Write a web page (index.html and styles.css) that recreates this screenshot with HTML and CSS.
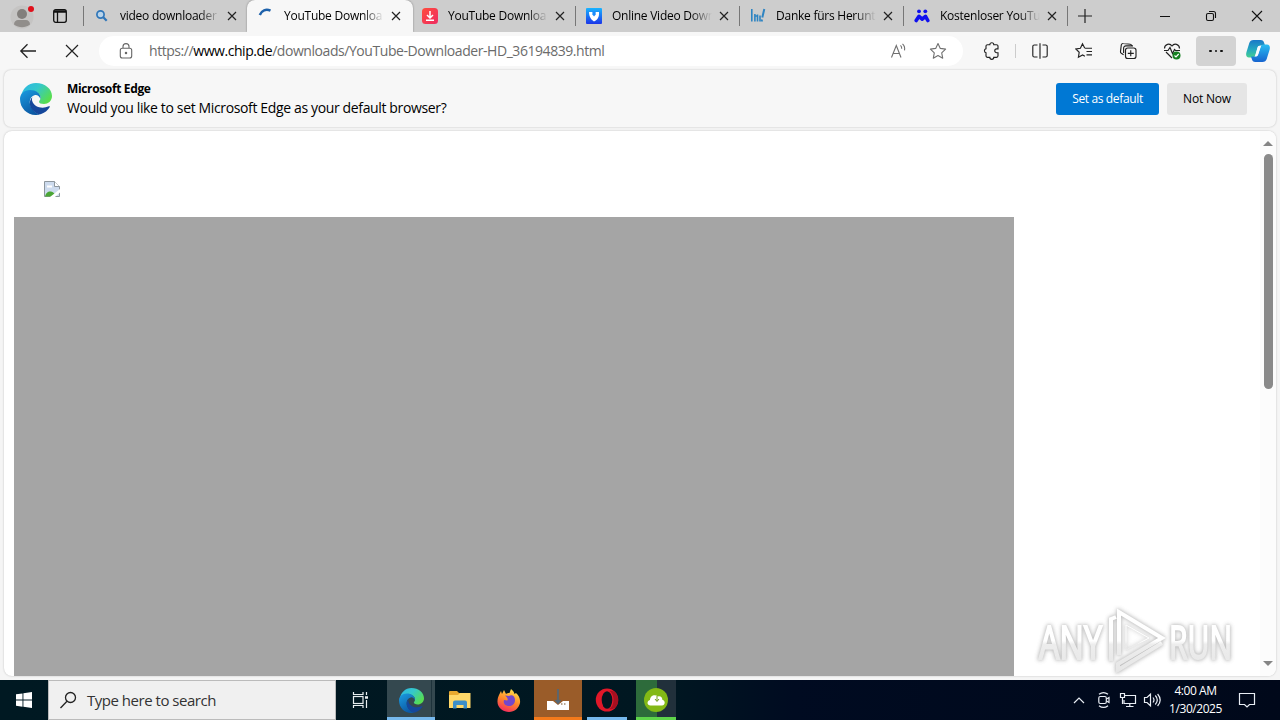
FILE: index.html
```html
<!DOCTYPE html>
<html lang="en">
<head>
<meta charset="utf-8">
<title>YouTube Downloader HD</title>
<link rel="stylesheet" href="styles.css">
</head>
<body>
<svg class="defs" width="0" height="0" aria-hidden="true">
  <defs>
    <linearGradient id="eg1" x1="0" y1="0" x2="1" y2="0.6"><stop offset="0" stop-color="#2bb5e8"/><stop offset=".5" stop-color="#35c8ca"/><stop offset="1" stop-color="#57dd50"/></linearGradient>
    <linearGradient id="eg2" x1="0" y1="0" x2="0.5" y2="1"><stop offset="0" stop-color="#1b9de2"/><stop offset="1" stop-color="#0c59a4"/></linearGradient>
    <linearGradient id="ff" x1=".7" y1="0" x2=".3" y2="1"><stop offset="0" stop-color="#ffe34a"/><stop offset=".5" stop-color="#ff8a2b"/><stop offset="1" stop-color="#f5285f"/></linearGradient>
    <linearGradient id="vd" x1="0" y1="0" x2="0" y2="1"><stop offset="0" stop-color="#19b4ff"/><stop offset="1" stop-color="#1b35e8"/></linearGradient>
    <linearGradient id="dl" x1="0" y1="0" x2="1" y2="1"><stop offset="0" stop-color="#ff4d3d"/><stop offset="1" stop-color="#ee2b62"/></linearGradient>
    <linearGradient id="cp1" x1="0" y1="0" x2="0" y2="1"><stop offset="0" stop-color="#1a78c8"/><stop offset=".55" stop-color="#25a9c0"/><stop offset="1" stop-color="#45cf90"/></linearGradient>
    <linearGradient id="cp2" x1="0" y1="0" x2="0" y2="1"><stop offset="0" stop-color="#27bdf2"/><stop offset="1" stop-color="#1764cf"/></linearGradient>
    <linearGradient id="wm" gradientUnits="userSpaceOnUse" x1="0" y1="8" x2="0" y2="68"><stop offset="0" stop-color="#fff"/><stop offset=".48" stop-color="#fff"/><stop offset=".54" stop-color="#ededed"/><stop offset="1" stop-color="#e6e6e6"/></linearGradient>
    <symbol id="x" viewBox="0 0 10 10"><path d="M1 1l8 8M9 1l-8 8" fill="none" stroke="#222" stroke-width="1.2"/></symbol>
    <symbol id="edge" viewBox="0 0 32 32">
      <path d="M1 14C2 6 8 0 16 0c9 0 16 6 16 13 0 5-4 8-8 8-3 0-5-1-5-2.300 0-1 1.500-1.600 1.500-4C20.500 10 15 7.500 10 8 5 8.500 2 11 1 14z" fill="url(#eg1)"/>
      <path d="M0 16c0-5 4-9 10-9 6 0 10.500 3.500 10.500 7.500 0 .5 0 .8-.2 1.300C19.500 13 17 11.500 15 12c-4 1-6 5-5 9 1 5 5 9 10 10.500C10 34 0 27 0 16z" fill="url(#eg2)"/>
      <path d="M12.500 14c-4 4-3.500 10 1 14 2.500 2.500 5 3.500 7 3.300 4-1.300 7.500-4 9.300-7.300.4-.8-.3-1-1-.7C22 26.500 14 24 12.200 18c-.4-1.500-.2-3 .3-4z" fill="#15479b"/>
    </symbol>
  </defs>
</svg>

<header class="tabstrip">
  <svg class="profile" width="28" height="28" viewBox="0 0 28 28"><circle cx="14" cy="13" r="11.500" fill="#c5c4c3"/><circle cx="14" cy="10" r="5" fill="#827f7c"/><path d="M6 20.500c0-3 2-4.500 4-4.500h8c2 0 4 1.500 4 4.500-5 3.500-11 3.500-16 0z" fill="#918e8b"/><circle cx="23" cy="5" r="3" fill="#e0101b"/></svg>
  <svg class="workspaces" width="14" height="14" viewBox="0 0 14 14" fill="none" stroke="#111" stroke-width="1.300"><rect x=".7" y=".7" width="12.600" height="12.600" rx="2"/><path d="M1 2.500h12" stroke-width="2.500"/><path d="M4.500 3v10"/></svg>
  <div class="tab first"><svg class="fav" viewBox="0 0 16 16"><circle cx="6.500" cy="6.500" r="3.600" fill="#b9d4ea" stroke="#2f76b9" stroke-width="1.700"/><path d="M9.300 9.300l3.400 3.500" stroke="#2f76b9" stroke-width="2.200"/></svg><span class="title">video downloader</span><svg class="close"><use href="#x"/></svg></div>
  <div class="tab active"><svg class="fav" viewBox="0 0 16 16"><path d="M1.800 7C3.500 2.500 8 .5 12.500 2.700" fill="none" stroke="#1d61ab" stroke-width="2.500"/></svg><span class="title">YouTube Downloa</span><svg class="close"><use href="#x"/></svg></div>
  <div class="tab"><svg class="fav" viewBox="0 0 16 16"><rect width="16" height="16" rx="3.500" fill="url(#dl)"/><path d="M8 3v6.500M5 7l3 3 3-3M4 12.300h8" fill="none" stroke="#fff" stroke-width="1.500"/></svg><span class="title">YouTube Downloa</span><svg class="close"><use href="#x"/></svg></div>
  <div class="tab"><svg class="fav" viewBox="0 0 16 16"><rect width="16" height="16" rx="1" fill="url(#vd)"/><path d="M3 4h3.500v3h3V4H13v2c0 4-2.500 6.500-5 7.500C5.500 12 3 9 3 4z" fill="#fff"/><path d="M6.800 3.500h2.500V7L8 8.500 6.800 7z" fill="#1c8cfb"/></svg><span class="title">Online Video Down</span><svg class="close"><use href="#x"/></svg></div>
  <div class="tab"><svg class="fav" viewBox="0 0 16 16" fill="none" stroke="#2e84c2" stroke-width="1.600"><path d="M1.800 1v12.500M4.900 6v7.500M7.500 6.500v7M10 7.500v6M4.900 8h2"/><path d="M14.300 1l-2 8.500M12 11.500l-.4 2" stroke-width="2"/></svg><span class="title">Danke fürs Herunt</span><svg class="close"><use href="#x"/></svg></div>
  <div class="tab last"><svg class="fav" viewBox="0 0 16 16" fill="#1010ee"><circle cx="5" cy="3.300" r="1.900"/><circle cx="11.300" cy="3.300" r="1.900"/><path d="M2.200 12.500L5 8.300l3.200 2.900 3.300-2.900 2.300 4.200" fill="none" stroke="#1010ee" stroke-width="3.600" stroke-linejoin="round" stroke-linecap="round"/></svg><span class="title">Kostenloser YouTu</span><svg class="close"><use href="#x"/></svg></div>
  <svg class="plus" width="14" height="14" viewBox="0 0 14 14"><path d="M7 0v14M0 7h14" stroke="#222" stroke-width="1.200"/></svg>
  <div class="winctl">
    <svg viewBox="0 0 12 12"><path d="M1 6.500h10" stroke="#111"/></svg>
    <svg viewBox="0 0 12 12" fill="none" stroke="#111" stroke-width="1.100"><rect x="1.500" y="3.500" width="7" height="7" rx="1.500"/><path d="M4 1.500h4.500a2 2 0 0 1 2 2V8"/></svg>
    <svg viewBox="0 0 12 12"><path d="M1 1l10 10M11 1L1 11" stroke="#111" stroke-width="1.100"/></svg>
  </div>
</header>

<nav class="toolbar">
  <svg class="back" width="18" height="16" viewBox="0 0 18 16" fill="none" stroke="#222" stroke-width="1.300"><path d="M17 8H2M8.500 1.300L1.800 8l6.700 6.700"/></svg>
  <svg class="stop" width="14" height="14" viewBox="0 0 14 14"><path d="M1 1l12 12M13 1L1 13" stroke="#222" stroke-width="1.200"/></svg>
  <div class="address">
    <svg width="14" height="16" viewBox="0 0 14 16" fill="none" stroke="#666" stroke-width="1.100"><rect x="1.300" y="5.300" width="11.400" height="9.700" rx="2"/><path d="M4 5V3.600a3 3 0 0 1 6 0V5"/><circle cx="7" cy="10" r=".7" fill="#666"/></svg>
    <span class="url">https://<b>www.chip.de</b>/downloads/YouTube-Downloader-HD_36194839.html</span>
    <svg class="read" width="18" height="18" viewBox="0 0 18 18" fill="none" stroke="#707070" stroke-width="1.100"><path d="M1.500 15.500L6.300 3.500 11 15.500M3 11.500h6.600M10.500 3.300c1 1 1.300 2 1.200 3.500M12.500 1.800c2 1.800 2.500 4 2 6.500"/></svg>
    <svg class="star" width="18" height="18" viewBox="0 0 18 18" fill="none" stroke="#707070" stroke-width="1.100" stroke-linejoin="round"><path d="M9 1.500l2.300 4.900 5.300.7-3.900 3.700 1 5.400L9 13.600l-4.700 2.600 1-5.400L1.400 7.100l5.300-.7z"/></svg>
  </div>
  <div class="tools">
    <svg viewBox="0 0 18 18"><path d="M4.500 2.700h2.300a2 2 0 0 1 4 0h2.700a1.500 1.500 0 0 1 1.500 1.500v2.600h-1.300a1.900 1.900 0 0 0 0 3.900H15v3.100a1.500 1.500 0 0 1-1.500 1.500h-2.700a2 2 0 0 1-4 0H4.500A1.500 1.500 0 0 1 3 13.800v-3.100a2 2 0 0 1 0-3.900V4.200a1.500 1.500 0 0 1 1.500-1.500z"/></svg>
    <i class="divider"></i>
    <svg viewBox="0 0 18 18"><path d="M6.500 3H3.300A1.500 1.500 0 0 0 1.800 4.500v9A1.500 1.500 0 0 0 3.300 15h3.200M11.500 3h3.200a1.500 1.500 0 0 1 1.500 1.500v9a1.500 1.500 0 0 1-1.500 1.500h-3.200M9 1.300v15.400"/></svg>
    <svg viewBox="0 0 18 18"><path d="M10 6.200H17M11.500 9.500H17M11.500 12.800H17M9.800 6.200L7.500 1.800 5.400 6.300l-4.500.7 3.300 3.300-.8 5L7.600 13l2.300 1.300"/></svg>
    <svg viewBox="0 0 18 18"><rect x="6.500" y="6" width="10.500" height="10.500" rx="2.300"/><path d="M11.750 8.300v6M8.800 11.300h6M4.600 12.800L2.300 11.300a2 2 0 0 1-.8-2L2.300 3a1.700 1.700 0 0 1 1.900-1.500l7 .7a1.700 1.700 0 0 1 1.500 1.700M4.600 11V6.200a2.200 2.200 0 0 1 2.200-2.300H14"/></svg>
    <svg viewBox="0 0 18 18"><path d="M9 4.200C7 .8 1.500 2 1.500 6.500M9 4.200c2-3.400 7.500-2.200 7.500 2.300M3 10l6 6M1 8.500h4l2-3 2.500 6 2-4 1 1H17"/><circle cx="13.500" cy="13.500" r="4" fill="#168021" stroke="none"/><path d="M11.500 13.500l1.500 1.500 2.700-3" stroke="#fff"/></svg>
    <span class="more"><i></i><i></i><i></i></span>
    <svg class="copilot" viewBox="0 0 24 24"><path d="M7.500 1h7.200c2 0 3 1.300 3.500 3L19 6.500h-4.500c-1.500 0-2.300.8-2.800 2.300L9.300 16c-.6 1.800-1.500 2.500-3.300 2.500H3C0 18.500-.3 15.500.5 13L3.300 4C4 2 5.200 1 7.500 1z" fill="url(#cp1)"/><path d="M16.500 23H9.300c-2 0-3-1.300-3.500-3L5 17.500h4.500c1.500 0 2.300-.8 2.800-2.300L14.700 8c.6-1.800 1.500-2.500 3.300-2.500h3c3 0 3.300 3 2.500 5.500l-2.800 9c-.7 2-1.900 3-4.200 3z" fill="url(#cp2)"/><path d="M12.500 7h2.300l-2.700 8.300c-.4 1.300-1 2-2.300 2H9.200L11.300 9c.3-1 .6-1.600 1.200-2z" fill="#f7fbff"/></svg>
  </div>
</nav>

<section class="notice">
  <svg class="edge-logo" width="32" height="32"><use href="#edge"/></svg>
  <div class="message"><strong>Microsoft Edge</strong><span>Would you like to set Microsoft Edge as your default browser?</span></div>
  <button class="primary"><span>Set as default</span></button>
  <button><span>Not Now</span></button>
</section>

<main class="page">
  <div class="content">
    <svg class="broken" width="16" height="16" viewBox="0 0 16 16"><path d="M.5.500h10l5 5v10H.5z" fill="#cddbee" stroke="#8d969d"/><path d="M10.500.500v5h5" fill="#fff" stroke="#8d969d"/><path d="M3 4.500h5v2H3z" fill="#fff"/><path d="M1 15.500c1-4.500 4-5.500 6-5s4 1.500 5 5z" fill="#4ba635"/><path d="M6 16l10-8v3.500L11 16z" fill="#fff"/></svg>
    <div class="placeholder"></div>
  </div>
  <div class="scroll"><i class="up"></i><i class="thumb"></i><i class="down"></i></div>
</main>

<svg class="watermark" width="210" height="76" viewBox="0 0 210 76">
  <g class="mark"><text x="9" y="55" textLength="63" lengthAdjust="spacingAndGlyphs">ANY</text><text x="139" y="55" textLength="63" lengthAdjust="spacingAndGlyphs">RUN</text>
  <path d="M81 57V15l5-2M89 51V8l43 26-44 26v6l44-27" fill="none"/><path d="M96 46V21l23 13z" fill="none" stroke-width="1"/></g>
</svg>

<footer class="taskbar">
  <div class="start"><svg width="16" height="16" viewBox="0 0 16 16" fill="#fff"><path d="M0 2.300L6.500 1.400V7.600H0zM7.400 1.300L16 0v7.600H7.400zM0 8.500h6.500v6.200L0 13.800zM7.400 8.500H16V16l-8.600-1.200z"/></svg></div>
  <div class="search"><svg width="18" height="18" viewBox="0 0 18 18" fill="none" stroke="#222" stroke-width="1.300"><circle cx="11.500" cy="6.500" r="5"/><path d="M8 10.200L1.500 17"/></svg><span>Type here to search</span></div>
  <div class="app view"><svg width="18" height="18" viewBox="0 0 18 18" fill="none" stroke="#e8eef0" stroke-width="1.200"><rect x="2.500" y="5.500" width="9.500" height="7"/><path d="M2.500 1v2.500H12V1M2.500 17v-2.500H12V17M15.500 1v3M15.500 9v8"/><path d="M14 6.500h3" stroke-width="2.500"/></svg></div>
  <div class="app edge"><svg width="25" height="25"><use href="#edge"/></svg></div>
  <div class="app"><svg width="22" height="20" viewBox="0 0 22 20"><path d="M0 2a1 1 0 0 1 1-1h7l2 2h11v15H0z" fill="#e8a92f"/><path d="M0 5h9l2-2h10.500v15H0z" fill="#ffd869"/><path d="M4 18.500v-6a2 2 0 0 1 2-2h10a2 2 0 0 1 2 2v6h-3.500V15h-7v3.500z" fill="#3d8fc9"/></svg></div>
  <div class="app"><svg width="24" height="24" viewBox="0 0 24 24"><path d="M2 7l2-4 1 3 2-4 2 4c1-.8 2-1 3.500-1L14 1c2 1.500 3 3 3.500 5L19 5c3 2.500 4.500 6 4 10-1 5-5.500 9-11 9S0 19.500.5 13c.1-2.500.6-4 1.500-6z" fill="url(#ff)"/><path d="M8 7.500l4 .5c3-2 6 .5 6 4 0 4-3 6-6 6-4 0-6-3-5-6l3 .5c1 0 1.500-2-2-5z" fill="#7447cc"/></svg></div>
  <div class="app installer"><svg width="22" height="24" viewBox="0 0 22 24"><path d="M0 13h6l5 4 5-4h6v9H0z" fill="#fff"/><path d="M11 1v14M8.500 12l2.500 3 2.500-3" fill="none" stroke="#536878" stroke-width="1.700"/><path d="M14 16h1.500M17 16h1.500" stroke="#754c25"/></svg></div>
  <div class="app opera"><svg width="24" height="24" viewBox="0 0 24 24"><ellipse cx="12" cy="12" rx="11.200" ry="11.500" fill="#e01829"/><path d="M14 3c6 2 6 16 0 18 5 1.500 9.200-3 9.200-9S19 1.500 14 3z" fill="#a60f20"/><ellipse cx="12" cy="12" rx="5.300" ry="8.800" fill="#031620"/></svg></div>
  <div class="app cloud"><svg width="24" height="24" viewBox="0 0 24 24"><circle cx="12" cy="12" r="12" fill="#83b915"/><path d="M6.500 17.500C3 17.500 2.300 13 6 12c0-4 4.500-6.500 8-3.500 2.500-.8 4.500 1 4.300 3.300 3.500.8 3 5.700-.3 5.700z" fill="#fff"/><path d="M13 8v5M11 11l2 2.500 2-2.500" stroke="#719d18" fill="none"/></svg></div>
  <div class="tray">
    <svg class="chev" width="12" height="8" viewBox="0 0 12 8"><path d="M1 7l5-5 5 5"/></svg>
    <svg class="cam" width="14" height="18" viewBox="0 0 14 18"><rect x="1.800" y="5.500" width="7.500" height="7" rx="1.500"/><path d="M9.500 8l2.500-1.500v5L9.500 10M2 3.300q4.500-3.500 9 0M2 14.700q4.500 3.500 9 0"/></svg>
    <svg class="net" width="18" height="16" viewBox="0 0 18 16"><path d="M6 3.500h10.500v8H5V8M10.800 11.500v3M7 14.500h7.500"/><path d="M1.500 1.500h4v4h-4zM3.500 5.500V12"/></svg>
    <svg class="vol" width="18" height="16" viewBox="0 0 18 16"><path d="M1.500 5.500H4l3.500-3.300v11.600L4 10.500H1.500zM10 5.500q2 2.500 0 5M12.300 3.500q4 4.500 0 9M14.600 2q5.200 6 0 12"/></svg>
    <div class="clock"><span>4:00 AM</span><span>1/30/2025</span></div>
    <svg class="bell" width="18" height="17" viewBox="0 0 18 17"><path d="M1.500 1.500h15v11h-5L9 15l-2.500-2.500h-5z"/></svg>
  </div>
</footer>
</body>
</html>
```

FILE: styles.css
```css
* { box-sizing: border-box; }
body { margin: 0; width: 1280px; height: 720px; overflow: hidden; background: #f5f5f5; font-family: "Open Sans", "Noto Sans", sans-serif; font-size: 12px; color: #000; display: flex; flex-direction: column; }
svg { display: block; flex: none; }
.defs { position: absolute; }
span { white-space: nowrap; }

.tabstrip { height: 32px; flex: none; background: #cdcdcd; display: flex; align-items: center; }
.profile { margin-left: 8px; margin-top: 3px; }
.workspaces { margin: 0 16px 0 17px; }
.tab { width: 164px; height: 32px; flex: none; display: flex; align-items: center; padding-left: 11px; background: linear-gradient(#777, #777) left center / 1px 20px no-repeat; }
.tab.first { margin-left: 0; }
.tab.active { background: #f7f7f7; border-radius: 8px 8px 0 0; width: 166px; margin-right: -2px; box-shadow: 0 0 2px #777; clip-path: inset(0 -3px 0 -3px); z-index: 1; }
.tab.active + .tab { background: none; }
.tab:nth-of-type(n+4) { background-position: 0 center; }
.tab.last { width: 165px; background: linear-gradient(#777, #777) left center / 1px 20px no-repeat, linear-gradient(#777, #777) right center / 1px 20px no-repeat; }
.fav { width: 16px; height: 16px; }
.title { margin-left: 10px; width: 101px; letter-spacing: -.25px; line-height: 18px; -webkit-mask-image: linear-gradient(90deg, #000 78%, transparent 99%); mask-image: linear-gradient(90deg, #000 78%, transparent 99%); }
.close { width: 10px; height: 10px; margin-left: 6px; }
.plus { margin-left: 10px; }
.tabstrip { padding-left: 0; }
.winctl { margin-left: auto; display: flex; gap: 34px; padding-right: 17px; }
.winctl svg { width: 12px; height: 12px; }

.toolbar { height: 38px; flex: none; display: flex; align-items: center; background: #f7f7f7; }
.back { margin-left: 19px; }
.stop { margin-left: 28px; }
.address { margin-left: 20px; width: 864px; height: 30px; background: #fff; border-radius: 15px; display: flex; align-items: center; padding-left: 20px; }
.url { margin-left: 16px; margin-top: -1px; font-size: 14px; letter-spacing: -.44px; color: #6b6b6b; width: 741px; }
.url b { font-weight: 400; color: #000; }
.star { margin-left: 21px; }
.tools { display: flex; align-items: center; padding-left: 20px; }
.tools svg { width: 18px; height: 18px; fill: none; stroke: #222; stroke-width: 1.150; margin-right: 26px; }
.divider { width: 1px; height: 14px; background: #ccc; margin: 0 15px 0 -12px; }
.tools svg:nth-of-type(5) { margin-right: 15px; }
.more { width: 40px; height: 30px; border-radius: 4px; background: #d3d3d3; display: flex; align-items: center; justify-content: center; gap: 3px; }
.more i { width: 2.500px; height: 2.500px; background: #111; border-radius: 50%; }
.tools .copilot { width: 24px; height: 24px; stroke: none; margin: 0 0 0 10px; }

.notice { height: 57px; flex: none; margin: 0 4px; padding: 0 29px 0 16px; border-radius: 7px; background: #f7f7f7; box-shadow: 0 0 2px #bbb; display: flex; align-items: center; }
.edge-logo { margin-top: 1px; }
.message { margin-left: 15px; flex: 1; display: flex; flex-direction: column; line-height: 19px; }
.message strong { font-size: 12px; letter-spacing: -.36px; margin-top: -2px; }
.message span { font-size: 14px; letter-spacing: -.36px; }
button { width: 80px; height: 32px; border: 0; border-radius: 3px; background: #e5e5e5; color: #000; padding: 0; margin-left: 8px; font: 12px "Open Sans", sans-serif; letter-spacing: -.2px; }
button.primary { width: 103px; background: #0078d4; color: #fff; letter-spacing: -.36px; }

.page { height: 545px; flex: none; margin: 4px 4px 4px; background: #fff; border-radius: 8px; box-shadow: 0 0 2px #bbb; display: flex; overflow: hidden; }
.content { flex: 1; padding: 50px 0 0 10px; }
.broken { margin-left: 30px; }
.placeholder { width: 1000px; height: 459px; background: #a5a5a5; margin-top: 20px; }
.scroll { width: 16px; background: #fcfcfc; display: flex; flex-direction: column; align-items: center; padding: 10px 0 10px; }
.up, .down { border: 5px solid transparent; border-top: 0; border-bottom: 5px solid #858585; }
.down { margin-top: auto; border-top: 5px solid #858585; border-bottom: 0; }
.thumb { width: 9px; height: 235px; margin-top: 8px; border-radius: 5px; background: #8a8a8a; }

.watermark { position: absolute; left: 1030px; top: 604px; }
.mark { fill: url(#wm); stroke: url(#wm); stroke-width: 4px; filter: drop-shadow(0 0 2px #bbb) drop-shadow(0 0 1px #ddd); }
.mark text { font: 46px "Open Sans", sans-serif; stroke-width: 2px; }

.taskbar { height: 40px; flex: none; background: linear-gradient(90deg, #001922 0, #001721 52%, #000b21 62%, #00081a 100%); display: flex; align-items: stretch; }
.start { width: 48px; display: flex; align-items: center; justify-content: center; }
.search { width: 288px; background: #f0f0f0; border: 1px solid #bbb; display: flex; align-items: center; padding-left: 10px; color: #333; }
.search span { font-size: 15px; letter-spacing: -.48px; margin-left: 10px; }
.app { width: 49px; display: flex; align-items: center; justify-content: center; }
.app.view { width: 51px; padding-right: 4px; }
.app.edge { width: 48px; background: linear-gradient(90deg, #34484f 44px, #071d27 44px, #34484f 45px); border-bottom: 3px solid #76b9ed; padding-top: 3px; }
.app.installer { width: 48px; margin-left: 1px; background: #9a5c29; border-bottom: 3px solid #f37a1b; padding-top: 3px; }
.app.opera { width: 40px; margin: 0 9px 0 5px; border-bottom: 3px solid #76b9ed; padding-top: 3px; }
.app.cloud { width: 40px; background: linear-gradient(90deg, #2d6b3b 21px, #21303b 21px); border-bottom: 3px solid #5ed44a; padding-top: 3px; }
.tray { margin-left: auto; display: flex; align-items: center; padding-right: 24px; color: #fff; }
.tray svg { fill: none; stroke: #e8edf4; stroke-width: 1.200; }
.cam { margin-left: 12px; }
.net { margin-left: 8px; }
.vol { margin-left: 6px; }
.clock { width: 69px; display: flex; flex-direction: column; align-items: center; line-height: 18px; font-size: 12px; letter-spacing: -.45px; }
.bell { margin-left: 8px; }
```
